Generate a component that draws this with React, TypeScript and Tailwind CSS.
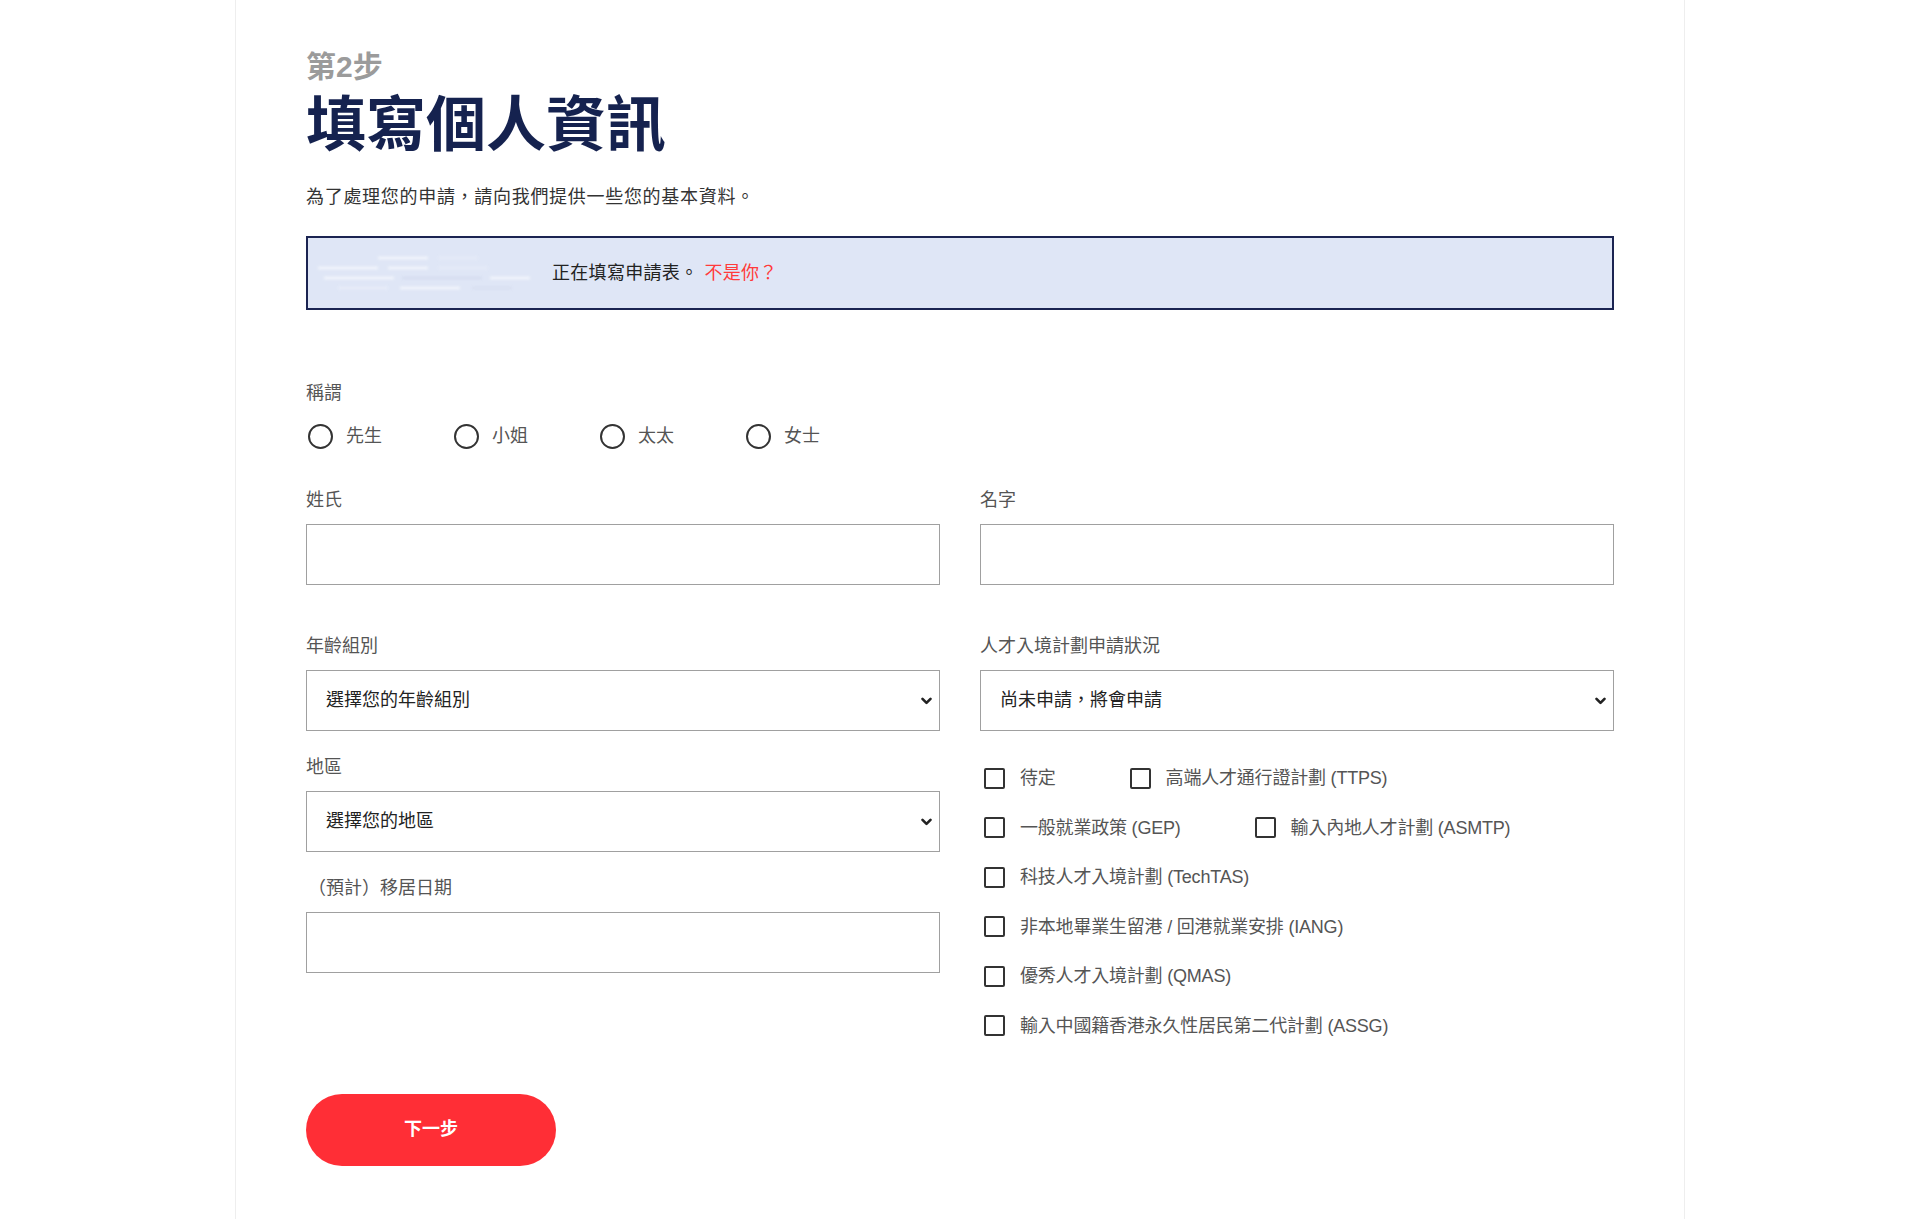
import React from 'react';

const font = "font-['Liberation_Sans','Noto_Sans_CJK_TC',sans-serif]";

const Label: React.FC<{ children: React.ReactNode }> = ({ children }) => (
  <div className="text-[18px] leading-[26px] text-[#555555] mb-[11px]">{children}</div>
);

const TextInput: React.FC = () => (
  <input
    type="text"
    className="block w-full h-[61px] border border-[#a0a0a0] bg-white px-[20px] text-[18px] outline-none"
  />
);

const Chevron: React.FC = () => (
  <svg width="11" height="8" viewBox="0 0 11 8" className="pointer-events-none absolute right-[8px] top-1/2 -translate-y-1/2">
    <path d="M1.5 1.8 L5.5 5.8 L9.5 1.8" fill="none" stroke="#222" strokeWidth="2.6" strokeLinecap="round" strokeLinejoin="round" />
  </svg>
);

const SelectBox: React.FC<{ value: string }> = ({ value }) => (
  <div className="relative">
    <select
      defaultValue={value}
      className={`block w-full h-[61px] appearance-none border border-[#a0a0a0] bg-white pl-[19px] pr-[30px] text-[18px] text-[#222222] outline-none ${font}`}
    >
      <option>{value}</option>
    </select>
    <Chevron />
  </div>
);

const Radio: React.FC<{ label: string }> = ({ label }) => (
  <label className="w-[146px] flex items-center gap-[13px]">
    <span className="ml-[2px] w-[25px] h-[25px] rounded-full border-[2.5px] border-[#333333] bg-white" />
    <span className="text-[18px] leading-[26px] text-[#555555]">{label}</span>
  </label>
);

const Check: React.FC<{ label: string }> = ({ label }) => (
  <label className="flex items-center gap-[15px]">
    <span className="w-[21px] h-[21px] rounded-[2px] border-[2.5px] border-[#333333] bg-white ml-[4px]" />
    <span className="text-[18px] leading-[26px] text-[#555555] tracking-[-0.2px]">{label}</span>
  </label>
);

const checkRows: string[][] = [
  ['待定', '高端人才通行證計劃 (TTPS)'],
  ['一般就業政策 (GEP)', '輸入內地人才計劃 (ASMTP)'],
  ['科技人才入境計劃 (TechTAS)'],
  ['非本地畢業生留港 / 回港就業安排 (IANG)'],
  ['優秀人才入境計劃 (QMAS)'],
  ['輸入中國籍香港永久性居民第二代計劃 (ASSG)'],
];

const App: React.FC = () => {
  return (
    <div className={`min-h-screen bg-white ${font}`}>
      <div className="mx-auto w-[1450px] min-h-screen border-x border-[#eeeeee] px-[70px] pt-[48px] pb-[60px]">
        <div className="text-[30px] leading-[38px] font-bold text-[#9b9b9b]">第2步</div>
        <h1 className="mt-[5px] text-[60px] leading-[70px] font-bold text-[#15224f]">填寫個人資訊</h1>
        <p className="mt-[22px] text-[18px] leading-[28px] text-[#333333] tracking-[0.7px]">
          為了處理您的申請，請向我們提供一些您的基本資料。
        </p>

        <div className="mt-[25px] h-[74px] border-2 border-[#1b2452] bg-[#dfe6f6] flex items-center pl-[10px]">
          <div className="w-[222px] h-[54px] flex flex-col justify-center gap-[8px] blur-[1.5px] opacity-80">
            <div className="flex gap-[10px] pl-[60px]">
              <span className="w-[50px] h-[2px] bg-white" />
              <span className="w-[40px] h-[2px] bg-[#e9edf8]" />
            </div>
            <div className="flex gap-[10px]">
              <span className="w-[60px] h-[2px] bg-white" />
              <span className="w-[40px] h-[2px] bg-white" />
              <span className="w-[50px] h-[2px] bg-[#e9edf8]" />
            </div>
            <div className="flex gap-[8px] pl-[6px]">
              <span className="w-[70px] h-[2px] bg-white" />
              <span className="w-[80px] h-[2px] bg-[#cfd6ea]" />
              <span className="w-[40px] h-[2px] bg-white" />
            </div>
            <div className="flex gap-[12px] pl-[20px]">
              <span className="w-[50px] h-[2px] bg-[#eef1fa]" />
              <span className="w-[60px] h-[2px] bg-white" />
              <span className="w-[40px] h-[2px] bg-[#d3d9ec]" />
            </div>
          </div>
          <span className="ml-[12px] text-[18px] leading-[26px] text-[#222222] tracking-[0.3px]">正在填寫申請表。</span>
          <span className="ml-[6px] text-[18px] leading-[26px] text-[#ff3b3b] tracking-[0.3px]">不是你？</span>
        </div>

        <div className="mt-[70px] text-[18px] leading-[26px] text-[#555555]">稱謂</div>
        <div className="mt-[17px] flex">
          <Radio label="先生" />
          <Radio label="小姐" />
          <Radio label="太太" />
          <Radio label="女士" />
        </div>

        <div className="mt-[38px] grid grid-cols-2 gap-x-[40px]">
          <div>
            <Label>姓氏</Label>
            <TextInput />
          </div>
          <div>
            <Label>名字</Label>
            <TextInput />
          </div>
        </div>

        <div className="mt-[48px] grid grid-cols-2 gap-x-[40px] items-start">
          <div className="flex flex-col gap-[23px]">
            <div>
              <Label>年齡組別</Label>
              <SelectBox value="選擇您的年齡組別" />
            </div>
            <div>
              <Label>地區</Label>
              <SelectBox value="選擇您的地區" />
            </div>
            <div>
              <Label>
                <span className="ml-[2px]">（預計）移居日期</span>
              </Label>
              <TextInput />
            </div>
          </div>
          <div>
            <Label>人才入境計劃申請狀況</Label>
            <SelectBox value="尚未申請，將會申請" />
            <div className="mt-[34px] flex flex-col gap-[23.5px]">
              {checkRows.map((row, i) => (
                <div key={i} className="flex gap-x-[70px]">
                  {row.map((c) => (
                    <Check key={c} label={c} />
                  ))}
                </div>
              ))}
            </div>
          </div>
        </div>

        <button className="mt-[55px] w-[250px] h-[72px] rounded-full bg-[#ff2e36] text-white text-[18px] font-bold">
          下一步
        </button>
      </div>
    </div>
  );
};

export default App;
